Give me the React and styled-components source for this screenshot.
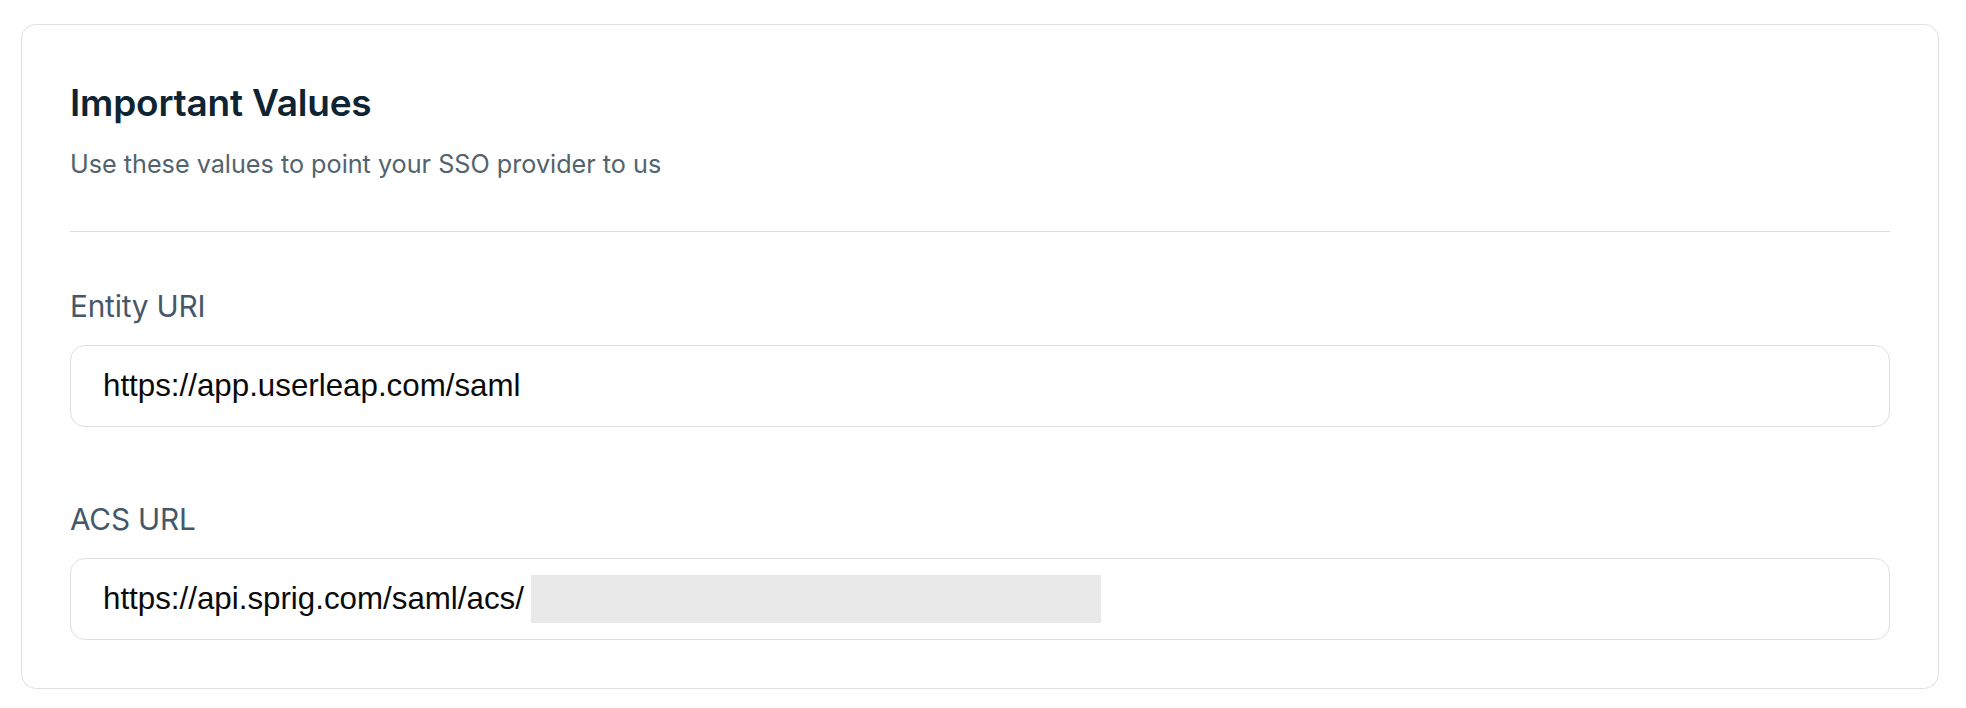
import React from "react";
import styled, { createGlobalStyle } from "styled-components";

const GlobalStyle = createGlobalStyle`
  html, body {
    margin: 0;
    padding: 0;
    background: #ffffff;
  }
  body {
    font-family: Inter, "Noto Sans", sans-serif;
    -webkit-font-smoothing: antialiased;
  }
`;

const Page = styled.div`
  padding: 24px 27px 0 21px;
`;

const Card = styled.section`
  border: 1px solid #e0e0e0;
  border-radius: 15px;
  padding: 56px 48px 48px;
  background: #fff;
`;

const Title = styled.h2`
  margin: 0;
  font-family: Inter, sans-serif;
  font-weight: 600;
  font-size: 37px;
  line-height: 44px;
  color: #0e2433;
  letter-spacing: -0.2px;
`;

const Subtitle = styled.p`
  margin: 23px 0 0;
  font-family: Inter, sans-serif;
  font-weight: 400;
  font-size: 25.2px;
  line-height: 32px;
  color: #52636e;
`;

const Divider = styled.hr`
  margin: 51px 0 58px;
  border: 0;
  height: 1px;
  background: #dedede;
`;

const Fields = styled.div`
  display: flex;
  flex-direction: column;
  gap: 76px;
`;

const Field = styled.div`
  display: flex;
  flex-direction: column;
  gap: 23px;
`;

const Label = styled.label`
  font-family: Inter, sans-serif;
  font-size: 29.8px;
  line-height: 32px;
  color: #45586a;
  letter-spacing: -0.2px;
`;

const ValueBox = styled.div`
  box-sizing: border-box;
  height: 82px;
  display: flex;
  align-items: center;
  padding: 0 32px;
  border: 1px solid #dedede;
  border-radius: 15px;
  font-family: "Liberation Sans", Arial, sans-serif;
  font-size: 31.3px;
  color: #0a0a0a;
  white-space: nowrap;
  overflow: hidden;
`;

const Redacted = styled.span`
  display: inline-block;
  margin-left: 7px;
  width: ${(p) => p.$width}px;
  height: 48px;
  background: #e9e9e9;
`;

export default function App() {
  return (
    <>
      <GlobalStyle />
      <Page>
        <Card>
          <Title>Important Values</Title>
          <Subtitle>Use these values to point your SSO provider to us</Subtitle>
          <Divider />
          <Fields>
            <Field>
              <Label>Entity URI</Label>
              <ValueBox>https://app.userleap.com/saml</ValueBox>
            </Field>
            <Field>
              <Label>ACS URL</Label>
              <ValueBox>
                https://api.sprig.com/saml/acs/
                <Redacted $width={570} />
              </ValueBox>
            </Field>
          </Fields>
        </Card>
      </Page>
    </>
  );
}
